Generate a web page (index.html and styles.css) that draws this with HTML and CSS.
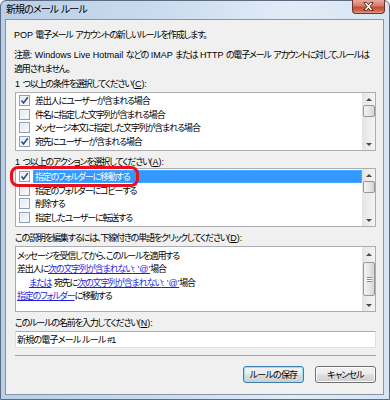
FILE: index.html
```html
<!DOCTYPE html>
<html lang="ja">
<head>
    <meta charset="UTF-8">
    <meta name="viewport" content="width=device-width, initial-scale=1.0">
    <title>新規のメール ルール</title>
    <link rel="stylesheet" href="styles.css">
</head>
<body>

    <div class="window">

        <div class="titlebar">
            <span class="title">新規のメール<span class="en"> </span>ルール</span>
            <span class="close">
                <svg width="13" height="9" viewBox="0 0 13 9">
                    <path d="M3.5 1 L9.5 8 M9.5 1 L3.5 8" stroke="#5a2a24" stroke-width="3" stroke-linecap="square"/>
                    <path d="M3.5 1 L9.5 8 M9.5 1 L3.5 8" stroke="#fff" stroke-width="1.5"/>
                </svg>
            </span>
        </div>

        <div class="client">
            <p class="intro"><span class="en">POP </span>電子メール<span class="en"> </span>アカウントの新しいルールを作成します。</p>
            <p class="note">注意<span class="en">: Windows Live Hotmail </span>などの<span class="en"> IMAP </span>または<span class="en"> HTTP </span>の電子メール<span class="en"> </span>アカウントに対して、ルールは<br>適用されません。</p>

            <!-- conditions -->
            <div class="caption first"><span class="en">1 </span>つ以上の条件を選択してください<span class="en">(<u>C</u>):</span></div>
            <div class="listbox">
                <ul class="items">
                    <li class="item"><span class="check"><svg width="9" height="9" viewBox="0 0 9 9"><path d="M1.5 4.5 L3.5 7 L7.8 1.2" fill="none" stroke="#2b4f8a" stroke-width="1.6"/></svg></span><span class="label">差出人にユーザーが含まれる場合</span></li>
                    <li class="item"><span class="check"></span><span class="label">件名に指定した文字列が含まれる場合</span></li>
                    <li class="item"><span class="check"></span><span class="label">メッセージ本文に指定した文字列が含まれる場合</span></li>
                    <li class="item"><span class="check"><svg width="9" height="9" viewBox="0 0 9 9"><path d="M1.5 4.5 L3.5 7 L7.8 1.2" fill="none" stroke="#2b4f8a" stroke-width="1.6"/></svg></span><span class="label">宛先にユーザーが含まれる場合</span></li>
                </ul>
                <div class="scrollbar">
                    <span class="arrow up"></span>
                    <span class="track"><span class="thumb"></span></span>
                    <span class="arrow down"></span>
                </div>
            </div>

            <!-- actions -->
            <div class="caption"><span class="en">1 </span>つ以上のアクションを選択してください<span class="en">(<u>A</u>):</span></div>
            <div class="listbox">
                <ul class="items">
                    <li class="item selected"><span class="check"><svg width="9" height="9" viewBox="0 0 9 9"><path d="M1.5 4.5 L3.5 7 L7.8 1.2" fill="none" stroke="#2b4f8a" stroke-width="1.6"/></svg></span><span class="label">指定のフォルダーに移動する</span></li>
                    <li class="item"><span class="check"></span><span class="label">指定のフォルダーにコピーする</span></li>
                    <li class="item"><span class="check"></span><span class="label">削除する</span></li>
                    <li class="item"><span class="check"></span><span class="label">指定したユーザーに転送する</span></li>
                </ul>
                <div class="scrollbar">
                    <span class="arrow up"></span>
                    <span class="track"><span class="thumb"></span></span>
                    <span class="arrow down"></span>
                </div>
                <span class="marker"></span>
            </div>

            <!-- description -->
            <div class="caption">この説明を編集するには、下線付きの単語をクリックしてください<span class="en">(<u>D</u>):</span></div>
            <div class="listbox desc">
                <div class="desc-text">
                    <div>メッセージを受信してから、このルールを適用する</div>
                    <div>差出人に<a href="#">次の文字列が含まれない<span class="en">: '@'</span></a>場合</div>
                    <div class="indent"><a href="#">または</a><span class="en"> </span>宛先に<a href="#">次の文字列が含まれない<span class="en">: '@'</span></a>場合</div>
                    <div><a href="#">指定のフォルダー</a>に移動する</div>
                </div>
                <div class="scrollbar">
                    <span class="arrow up"></span>
                    <span class="track"><span class="thumb long"><span class="grip"></span></span></span>
                    <span class="arrow down"></span>
                </div>
            </div>

            <!-- name -->
            <div class="caption">このルールの名前を入力してください<span class="en">(<u>N</u>):</span></div>
            <input class="name-input" type="text" value="新規の電子メール ルール #1">

            <div class="separator"></div>

            <div class="buttons">
                <button class="btn default">ルールの保存</button>
                <button class="btn">キャンセル</button>
            </div>
        </div>

    </div>

</body>
</html>
```

FILE: styles.css
```css
* {
    box-sizing: border-box;
}

body {
    margin: 0;
    padding: 0;
    background: #fff;
    font-family: "Liberation Sans", "Noto Sans CJK JP", sans-serif;
    font-size: 9px;
    letter-spacing: -1.15px;
    font-feature-settings: "palt";
    color: #000;
}

.en {
    letter-spacing: 0;
}


.window {
    width: 390px;
    height: 400px;
    border: 1px solid #5b6b80;
    border-radius: 6px 6px 0 0;
    padding: 0 5px 4px 4px;
    display: flex;
    flex-direction: column;
    background: linear-gradient(to right, #b9cfe7 0%, #c9dbee 40%, #e2ecf7 75%, #d6e4f3 100%);
}

.titlebar {
    height: 18px;
    display: flex;
    align-items: flex-start;
}

.title {
    padding-left: 1px;
    font-size: 10px;
    line-height: 18px;
    letter-spacing: -0.9px;
}

.close {
    margin: -1px -1px 0 auto;
    width: 33px;
    height: 14px;
    border: 1px solid #6a3530;
    border-top: none;
    border-radius: 0 0 4px 4px;
    background: linear-gradient(#e9aa9d 0%, #d9786a 45%, #c24a36 55%, #cf6a50 85%, #e7a27e 100%);
    display: flex;
    align-items: center;
    justify-content: center;
}


.client {
    flex: 1;
    background: #f0f0f0;
    border: 1px solid #8596ac;
    padding: 0 7px 0 9px;
    display: flex;
    flex-direction: column;
    overflow: hidden;
}

.intro {
    margin: 8px 0 0 -1px;
    line-height: 14px;
}

.note {
    margin: 6px 0 0 -1px;
    line-height: 14px;
    white-space: nowrap;
}

.caption {
    line-height: 12px;
    margin-top: 5px;
}

.caption.first {
    margin-top: 2px;
    margin-bottom: 2px;
}

u {
    text-decoration: underline;
}


.listbox {
    position: relative;
    height: 59px;
    background: #fff;
    border: 1px solid #abadb3;
    display: flex;
}

.items {
    flex: 1;
    list-style: none;
    margin: 0;
    padding: 1px 0 0 0;
}

.item {
    height: 13.5px;
    display: flex;
    align-items: center;
}

.check {
    width: 11px;
    height: 11px;
    margin: 0 3px 0 3px;
    border: 1px solid #8ba0bb;
    background: linear-gradient(135deg, #dfe5ec, #fdfdfd);
    box-shadow: inset 0 0 0 1px #f4f6f8;
    display: flex;
    align-items: center;
    justify-content: center;
}

.label {
    flex: 1;
    height: 13px;
    line-height: 12px;
    padding-left: 1px;
    border: 1px solid transparent;
}

.selected .label {
    background: #3399ff;
    color: #fff;
    border: 1px dotted #d99a56;
}

.marker {
    position: absolute;
    left: -6px;
    top: -3px;
    width: 129px;
    height: 21px;
    border: 3px solid #e8101c;
    border-radius: 8px;
}


.scrollbar {
    width: 13px;
    display: flex;
    flex-direction: column;
    background: linear-gradient(to right, #e4e4e4, #f4f4f4);
}

.arrow {
    height: 12px;
    display: flex;
    align-items: center;
    justify-content: center;
}

.arrow::after {
    content: "";
    border-left: 3px solid transparent;
    border-right: 3px solid transparent;
}

.arrow.up::after {
    border-bottom: 3px solid #4a4a4a;
}

.arrow.down::after {
    border-top: 3px solid #4a4a4a;
}

.track {
    flex: 1;
    display: flex;
    flex-direction: column;
}

.thumb {
    height: 12px;
    margin: 0 0 0 1px;
    border: 1px solid #979797;
    border-radius: 2px;
    background: linear-gradient(to right, #f4f4f4, #e6e6e6 50%, #d5d5d5);
    display: flex;
    align-items: center;
    justify-content: center;
}

.thumb.long {
    height: 34px;
    margin-top: 2px;
}

.grip {
    width: 5px;
    height: 5px;
    border-top: 1px solid #8a8a8a;
    border-bottom: 1px solid #8a8a8a;
    background: linear-gradient(#fff 0 1px, #8a8a8a 1px 2px, #fff 2px);
}


.desc {
    height: 66px;
    margin-top: 2px;
}

.desc .arrow.up {
    margin-top: 1px;
}

.desc-text {
    flex: 1;
    padding: 3px 0 0 1px;
    line-height: 13.4px;
}

.desc-text a {
    color: #1f1fe0;
    text-decoration: underline;
}

.indent {
    padding-left: 12px;
}


.name-input {
    margin-top: 2px;
    height: 17px;
    width: 100%;
    border: 1px solid #dbdfe6;
    border-top-color: #abadb3;
    background: #fff;
    font: inherit;
    letter-spacing: -0.8px;
    font-feature-settings: inherit;
    padding: 0 0 0 1px;
    color: #000;
}

.separator {
    margin-top: 7px;
    height: 1px;
    background: #a0a0a0;
}

.buttons {
    margin-top: 10px;
    display: flex;
    justify-content: flex-end;
    gap: 11px;
}

.btn {
    width: 61px;
    height: 17px;
    padding: 0;
    border: 1px solid #707070;
    border-radius: 3px;
    font: inherit;
    letter-spacing: -0.8px;
    font-feature-settings: inherit;
    color: #000;
    background: linear-gradient(#f2f2f2 0%, #ebebeb 48%, #dddddd 52%, #cfcfcf 100%);
    box-shadow: inset 0 0 0 1px #fcfcfc;
}

.btn.default {
    border-color: #3c7fb1;
    box-shadow: inset 0 0 0 1px #9fdcf8;
}
```
